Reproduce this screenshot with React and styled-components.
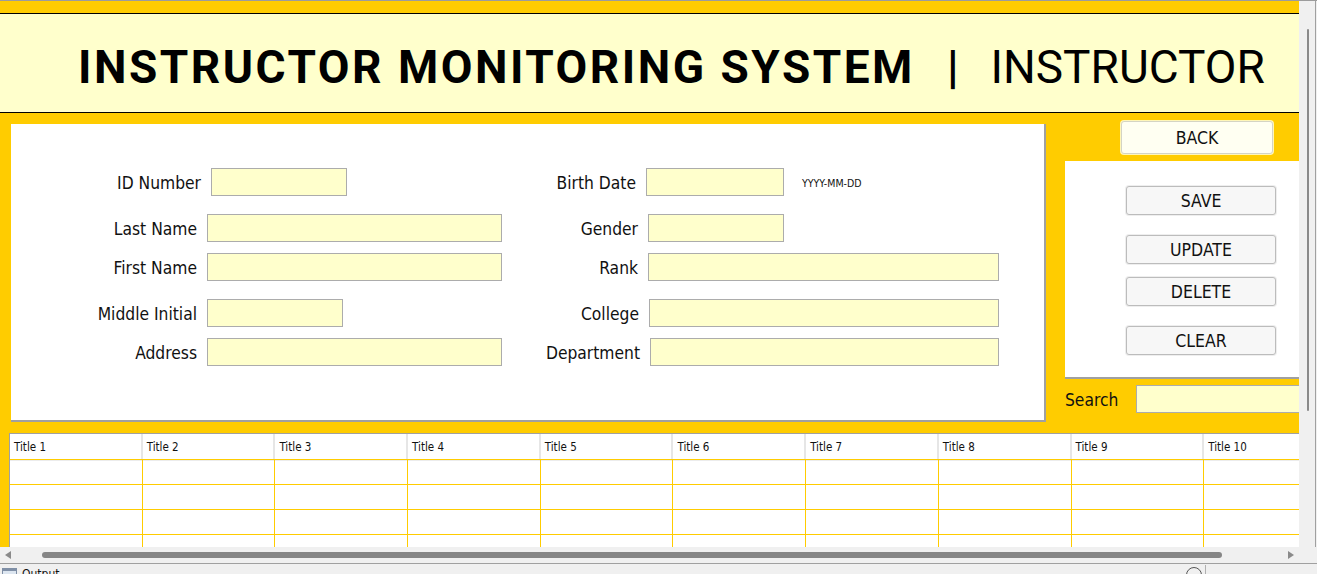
import React from "react";
import styled, { createGlobalStyle } from "styled-components";

const UI_FONT = `"DejaVu Sans Condensed", "DejaVu Sans", "Liberation Sans", sans-serif`;

const GlobalStyle = createGlobalStyle`
  html, body {
    margin: 0;
    padding: 0;
    background: #f0f0f0;
  }
  body {
    width: 1317px;
    height: 574px;
    overflow: hidden;
    font-family: ${UI_FONT};
  }
  * {
    box-sizing: border-box;
  }
`;

const leftFields = [
  { label: "ID Number", labelWidth: 190, width: 136 },
  { label: "Last Name", labelWidth: 186, width: 295 },
  { label: "First Name", labelWidth: 186, width: 295 },
  { label: "Middle Initial", labelWidth: 186, width: 136 },
  { label: "Address", labelWidth: 186, width: 295 },
];

const rightFields = [
  { label: "Birth Date", labelWidth: 96, width: 138, hint: "YYYY-MM-DD" },
  { label: "Gender", labelWidth: 98, width: 136 },
  { label: "Rank", labelWidth: 98, width: 351 },
  { label: "College", labelWidth: 99, width: 350 },
  { label: "Department", labelWidth: 100, width: 349 },
];

// space above each form row
const rowGaps = [44, 18, 11, 18, 11];

const actions = [
  { text: "SAVE", gap: 0 },
  { text: "UPDATE", gap: 20 },
  { text: "DELETE", gap: 13 },
  { text: "CLEAR", gap: 20 },
];

const columns = Array.from({ length: 10 }, (_, i) => `Title ${i + 1}`);

const App = () => {
  return (
    <>
      <GlobalStyle />
      <Window>
        <Viewport>
          <Canvas>
            <Header>
              <TitleMain>INSTRUCTOR MONITORING SYSTEM</TitleMain>
              <Divider>|</Divider>
              <TitleRole>INSTRUCTOR</TitleRole>
            </Header>

            <Body>
              <FormPanel>
                {leftFields.map((left, i) => {
                  const right = rightFields[i];
                  return (
                    <FormRow key={left.label} $gap={rowGaps[i]}>
                      <Field $span={529}>
                        <Label $w={left.labelWidth}>{left.label}</Label>
                        <Input $w={left.width} />
                      </Field>
                      <Field>
                        <Label $w={right.labelWidth}>{right.label}</Label>
                        <Input $w={right.width} />
                        {right.hint && <Hint>{right.hint}</Hint>}
                      </Field>
                    </FormRow>
                  );
                })}
              </FormPanel>

              <SideColumn>
                <BackButton>BACK</BackButton>
                <ActionPanel>
                  {actions.map((a) => (
                    <ActionButton key={a.text} $gap={a.gap}>
                      {a.text}
                    </ActionButton>
                  ))}
                </ActionPanel>
                <SearchRow>
                  <SearchLabel>Search</SearchLabel>
                  <Input $w={190} />
                </SearchRow>
              </SideColumn>
            </Body>

            <Table>
              <HeadRow>
                {columns.map((c) => (
                  <HeadCell key={c}>{c}</HeadCell>
                ))}
              </HeadRow>
              {[0, 1, 2, 3].map((r) => (
                <BodyRow key={r}>
                  {columns.map((c) => (
                    <BodyCell key={c} />
                  ))}
                </BodyRow>
              ))}
            </Table>
          </Canvas>

          <VScroll>
            <VThumb />
          </VScroll>
        </Viewport>

        <HScroll>
          <Arrow $dir="left" />
          <HThumb />
          <Arrow $dir="right" />
        </HScroll>

        <StatusBar>
          <StatusIcon />
          <StatusText>Output</StatusText>
          <StatusInfo />
          <StatusSep />
        </StatusBar>
      </Window>
    </>
  );
};

export default App;

const Window = styled.div`
  width: 1317px;
  height: 574px;
  display: flex;
  flex-direction: column;
  background: #f0f0f0;
  border-top: 1px solid #9c9c9c;
  overflow: hidden;
`;

const Viewport = styled.div`
  display: flex;
  height: 546px;
  flex-shrink: 0;
`;

const Canvas = styled.div`
  width: 1299px;
  flex-shrink: 0;
  background: #ffcc00;
  padding-top: 12px;
  overflow: hidden;
`;

const Header = styled.header`
  height: 100px;
  border-top: 1px solid #000;
  border-bottom: 1px solid #000;
  background: #ffffcc;
  display: flex;
  align-items: flex-start;
  padding: 30px 0 0 78px;
  font-family: Roboto, "Liberation Sans", sans-serif;
  font-size: 46px;
  line-height: 1;
  color: #000;
  white-space: nowrap;
`;

const TitleMain = styled.span`
  font-weight: 700;
  letter-spacing: 2.5px;
`;

const Divider = styled.span`
  font-weight: 700;
  margin-left: 32px;
`;

const TitleRole = styled.span`
  font-weight: 400;
  margin-left: 32px;
`;

const Body = styled.div`
  display: flex;
  align-items: flex-start;
  padding-left: 11px;
`;

const FormPanel = styled.div`
  margin-top: 11px;
  width: 1035px;
  height: 298px;
  flex-shrink: 0;
  background: #fff;
  border-right: 2px solid #a0a0a0;
  border-bottom: 2px solid #a0a0a0;
`;

const FormRow = styled.div`
  display: flex;
  align-items: center;
  margin-top: ${(p) => p.$gap}px;
`;

const Field = styled.div`
  display: flex;
  align-items: center;
  width: ${(p) => (p.$span ? `${p.$span}px` : "auto")};
  flex-shrink: 0;
`;

const Label = styled.span`
  width: ${(p) => p.$w}px;
  flex-shrink: 0;
  margin-right: 10px;
  padding-top: 2px;
  text-align: right;
  font-family: ${UI_FONT};
  font-stretch: condensed;
  font-size: 17.3px;
  color: #111;
  white-space: nowrap;
`;

const Input = styled.input`
  width: ${(p) => p.$w}px;
  height: 28px;
  flex-shrink: 0;
  margin: 0;
  padding: 0 4px;
  background: #ffffcc;
  border: 1px solid #acacac;
  border-radius: 0;
  font-family: ${UI_FONT};
  font-size: 15px;
  outline: none;
`;

const Hint = styled.span`
  margin-left: 18px;
  padding-top: 2px;
  font-family: ${UI_FONT};
  font-stretch: condensed;
  font-size: 10.5px;
  color: #111;
`;

const SideColumn = styled.div`
  margin: 8px 0 0 19px;
  width: 234px;
  flex-shrink: 0;
  display: flex;
  flex-direction: column;
`;

const buttonBase = `
  font-family: ${UI_FONT};
  font-stretch: condensed;
  font-size: 17.5px;
  color: #111;
  border-radius: 3px;
  padding: 0;
  cursor: pointer;
`;

const BackButton = styled.button`
  ${buttonBase}
  margin-left: 56px;
  width: 152px;
  height: 33px;
  background: #fffff2;
  border: 1px solid #d4d4c4;
  box-shadow: 0 0 0 1px #fff6b8;
`;

const ActionPanel = styled.div`
  margin-top: 7px;
  background: #fff;
  border-bottom: 2px solid #a0a0a0;
  padding: 25px 0 22px 61px;
  display: flex;
  flex-direction: column;
  align-items: flex-start;
`;

const ActionButton = styled.button`
  ${buttonBase}
  margin-top: ${(p) => p.$gap}px;
  width: 150px;
  height: 29px;
  background: #f7f7f7;
  border: 1px solid #bcbcbc;
  box-shadow: 0 0 0 1px #eeeeee;
`;

const SearchRow = styled.div`
  margin-top: 6px;
  display: flex;
  align-items: center;
`;

const SearchLabel = styled.span`
  width: 71px;
  flex-shrink: 0;
  padding-top: 2px;
  font-family: ${UI_FONT};
  font-stretch: condensed;
  font-size: 17.3px;
  color: #111;
`;

const Table = styled.div`
  margin: 11px 0 0 9px;
  width: 1340px;
  background: #fff;
  border-top: 1px solid #a0a0a0;
  border-left: 1px solid #a0a0a0;
`;

const HeadRow = styled.div`
  display: grid;
  grid-template-columns: repeat(10, 132.7px);
  height: 25px;
`;

const HeadCell = styled.div`
  padding-left: 4px;
  line-height: 26px;
  border-right: 2px solid #e6e6e6;
  border-bottom: 1px solid #ececec;
  font-family: ${UI_FONT};
  font-stretch: condensed;
  font-size: 11.5px;
  color: #111;
`;

const BodyRow = styled.div`
  display: grid;
  grid-template-columns: repeat(10, 132.7px);
  height: 25px;
`;

const BodyCell = styled.div`
  border-top: 1px solid #ffcc00;
  border-right: 1px solid #ffcc00;
`;

const VScroll = styled.div`
  width: 17px;
  flex-shrink: 0;
  background: #f0f0f0;
  border-right: 1px solid #a0a0a0;
  padding: 28px 0 0 8px;
`;

const VThumb = styled.div`
  width: 2px;
  height: 382px;
  background: #8a8a8a;
  border-radius: 1px;
`;

const HScroll = styled.div`
  height: 16px;
  flex-shrink: 0;
  display: flex;
  align-items: center;
  padding-left: 5px;
  background: #f0f0f0;
`;

const Arrow = styled.div`
  width: 0;
  height: 0;
  border-top: 4px solid transparent;
  border-bottom: 4px solid transparent;
  ${(p) =>
    p.$dir === "left"
      ? "border-right: 6px solid #8a8a8a;"
      : "border-left: 6px solid #8a8a8a; margin-left: 66px;"}
`;

const HThumb = styled.div`
  margin-left: 31px;
  width: 1180px;
  height: 6px;
  border-radius: 3px;
  background: #868686;
`;

const StatusBar = styled.div`
  flex: 1;
  display: flex;
  align-items: flex-start;
  border-top: 1px solid #a0a0a0;
  padding: 4px 0 0 2px;
`;

const StatusIcon = styled.div`
  width: 15px;
  height: 12px;
  border: 1px solid #7f8fa6;
  border-top-width: 3px;
  background: #dde6f0;
`;

const StatusText = styled.span`
  margin-left: 5px;
  font-family: ${UI_FONT};
  font-size: 12px;
  color: #111;
  line-height: 1;
`;

const StatusInfo = styled.div`
  margin-left: auto;
  margin-top: -1px;
  width: 16px;
  height: 16px;
  border-radius: 50%;
  border: 1px solid #555;
`;

const StatusSep = styled.div`
  margin: -3px 111px 0 3px;
  width: 1px;
  height: 12px;
  background: #b0b0b0;
`;
